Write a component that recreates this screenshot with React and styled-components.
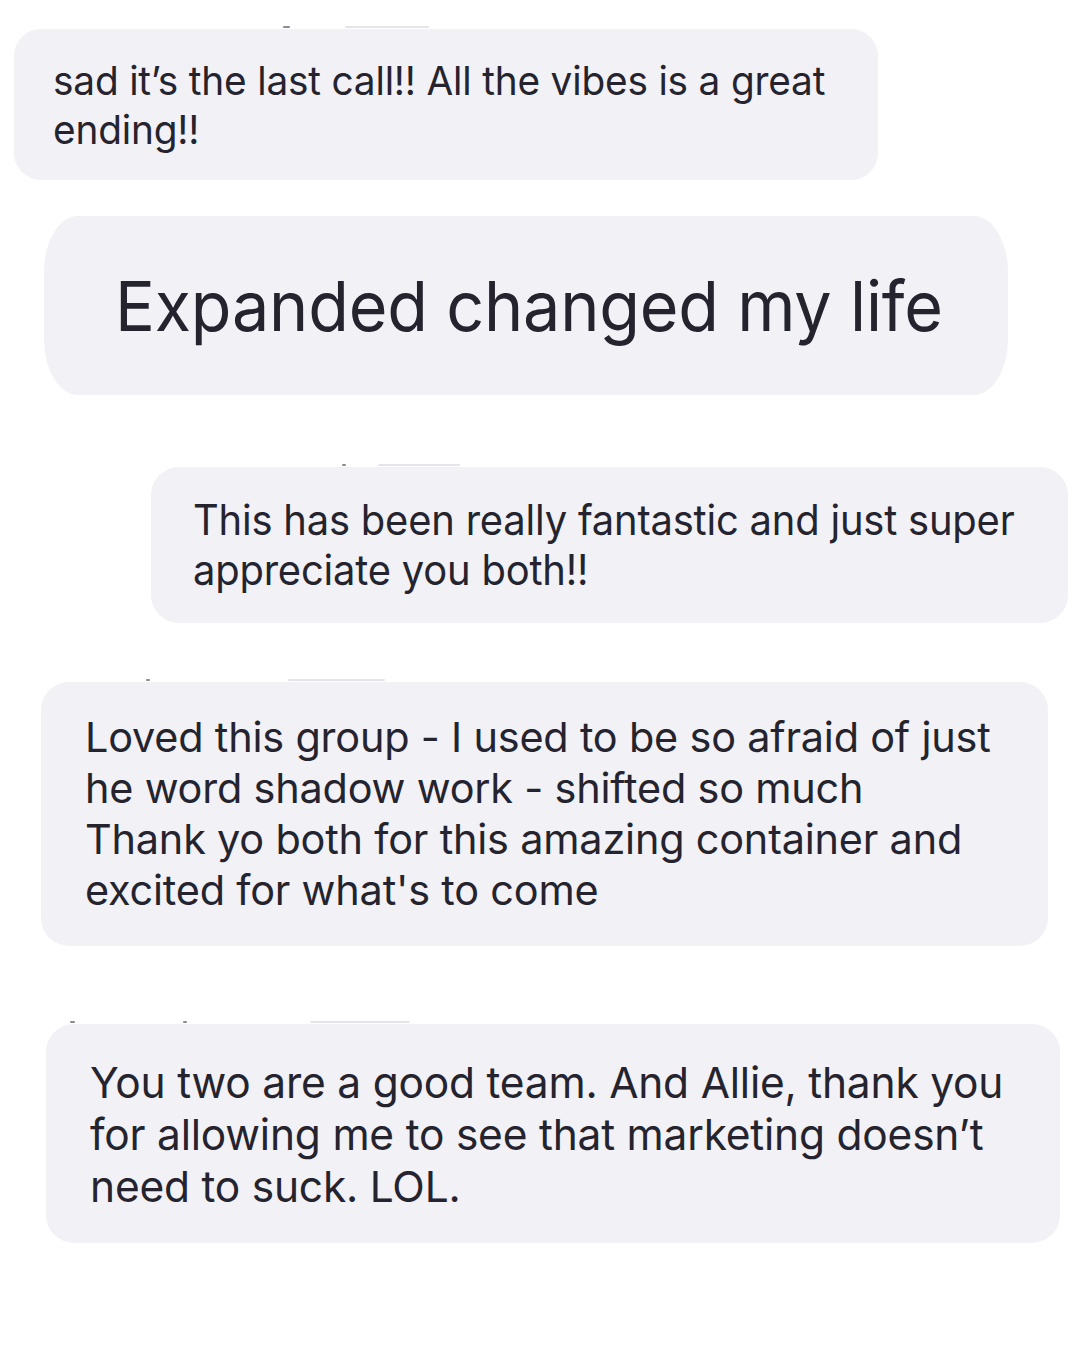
import React from "react";
import styled, { createGlobalStyle } from "styled-components";

const Global = createGlobalStyle`
  html, body {
    margin: 0;
    padding: 0;
    background: #ffffff;
  }
  body {
    font-family: Inter, "Noto Sans", "Liberation Sans", sans-serif;
    color: #25242e;
  }
`;

// chat bubbles, clipped out of a screenshot
const messages = [
  {
    id: 1, top: 29, left: 14, width: 864, height: 151, padLeft: 39,
    size: 40, lineHeight: 49, scale: 0.97, radius: "27px",
    traces: [{ x: 283, w: 7, dark: true }, { x: 345, w: 84 }],
    lines: ["sad it’s the last call!! All the vibes is a great", "ending!!"],
  },
  {
    id: 2, top: 36, left: 44, width: 964, height: 179, padLeft: 71,
    size: 69, lineHeight: 80, scale: 0.963, radius: "34px / 56px",
    lines: ["Expanded changed my life"],
  },
  {
    id: 3, top: 72, left: 151, width: 917, height: 156, padLeft: 42,
    size: 42, lineHeight: 50, scale: 0.95, radius: "28px",
    traces: [{ x: 342, w: 4, dark: true }, { x: 378, w: 82 }],
    lines: ["This has been really fantastic and just super", "appreciate you both!!"],
  },
  {
    id: 4, top: 59, left: 41, width: 1007, height: 264, padLeft: 44,
    size: 41, lineHeight: 51, scale: 1.01, radius: "28px",
    traces: [{ x: 146, w: 4, dark: true }, { x: 288, w: 97 }],
    lines: [
      "Loved this group - I used to be so afraid of just",
      "he word shadow work - shifted so much",
      "Thank yo both for this amazing container and",
      "excited for what's to come",
    ],
  },
  {
    id: 5, top: 78, left: 46, width: 1014, height: 219, padLeft: 44,
    size: 43, lineHeight: 52, scale: 0.987, radius: "28px",
    traces: [{ x: 70, w: 5, dark: true }, { x: 183, w: 4, dark: true }, { x: 310, w: 100 }],
    lines: [
      "You two are a good team. And Allie, thank you",
      "for allowing me to see that marketing doesn’t",
      "need to suck. LOL.",
    ],
  },
];

function App() {
  return (
    <Page>
      <Global />
      {messages.map((m) => (
        <Item key={m.id} $top={m.top}>
          <TraceRow>
            {(m.traces || []).map((t, i) => (
              <Trace key={i} $x={t.x} $w={t.w} $dark={t.dark} />
            ))}
          </TraceRow>
          <Bubble
            $left={m.left}
            $width={m.width}
            $height={m.height}
            $pad={m.padLeft}
            $radius={m.radius}
          >
            <Text $size={m.size} $lh={m.lineHeight} $scale={m.scale}>
              {m.lines.map((l, i) => (
                <Line key={i}>{l}</Line>
              ))}
            </Text>
          </Bubble>
        </Item>
      ))}
    </Page>
  );
}

export default App;

const Page = styled.div`
  width: 1080px;
  height: 1350px;
  display: flex;
  flex-direction: column;
  overflow: hidden;
`;

const Item = styled.div`
  display: flex;
  flex-direction: column;
  margin-top: ${(p) => p.$top - 4}px;
`;

const TraceRow = styled.div`
  position: relative;
  height: 4px;
`;

const Trace = styled.span`
  position: absolute;
  left: ${(p) => p.$x}px;
  bottom: 1px;
  width: ${(p) => p.$w}px;
  height: 2px;
  border-radius: 1px;
  background: ${(p) => (p.$dark ? "#8a8a92" : "#e4e4ea")};
`;

const Bubble = styled.div`
  box-sizing: border-box;
  margin-left: ${(p) => p.$left}px;
  width: ${(p) => p.$width}px;
  height: ${(p) => p.$height}px;
  padding-left: ${(p) => p.$pad}px;
  border-radius: ${(p) => p.$radius};
  background: #f1f1f6;
  display: flex;
  align-items: center;
  overflow: hidden;
`;

const Text = styled.div`
  font-size: ${(p) => p.$size}px;
  line-height: ${(p) => p.$lh}px;
  letter-spacing: -0.2px;
  white-space: nowrap;
  transform: scaleX(${(p) => p.$scale});
  transform-origin: left center;
`;

const Line = styled.div``;
